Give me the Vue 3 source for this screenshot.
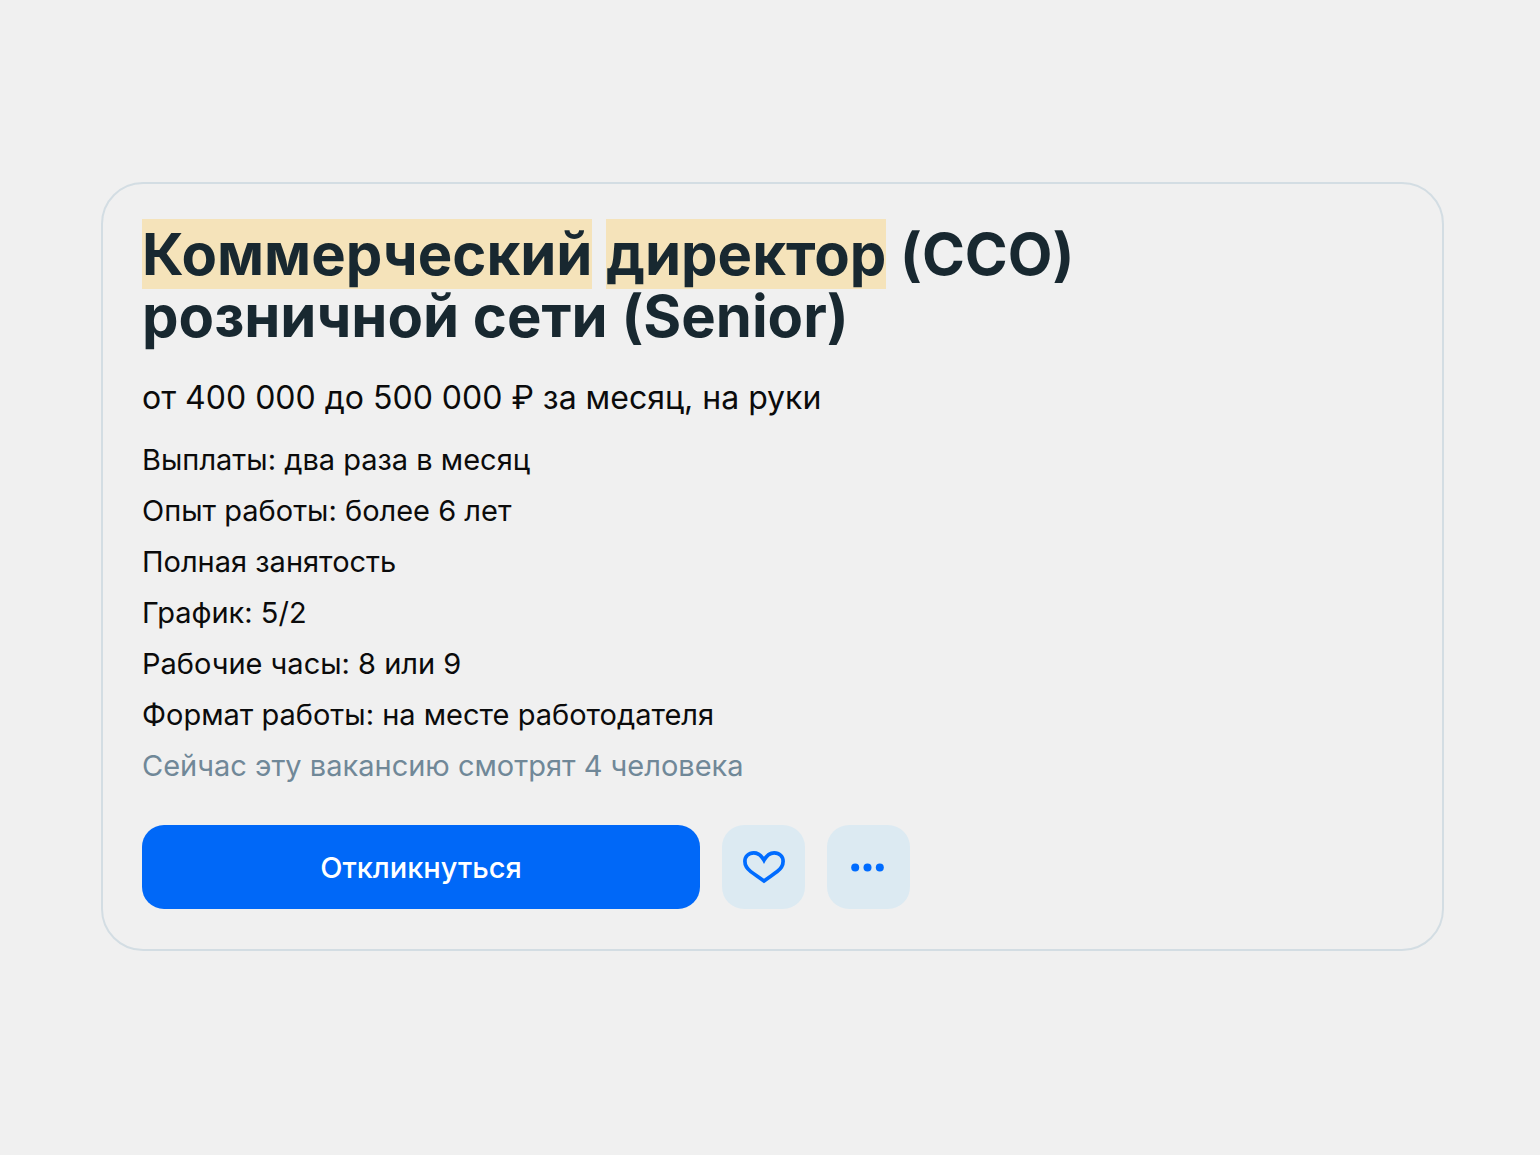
<script setup>
const details = [
  'Выплаты: два раза в месяц',
  'Опыт работы: более 6 лет',
  'Полная занятость',
  'График: 5/2',
  'Рабочие часы: 8 или 9',
  'Формат работы: на месте работодателя',
]
</script>

<template>
  <main class="page">
    <article class="card">
      <h1 class="title"><mark>Коммерческий</mark> <mark>директор</mark> (CCO)<br />розничной сети (Senior)</h1>
      <p class="salary">от 400 000 до 500 000 ₽ за месяц, на руки</p>
      <ul class="details">
        <li v-for="item in details" :key="item">{{ item }}</li>
        <li class="viewers">Сейчас эту вакансию смотрят 4 человека</li>
      </ul>
      <div class="actions">
        <button type="button" class="apply">Откликнуться</button>
        <button type="button" class="icon-button" aria-label="В избранное">
          <svg width="44" height="34" viewBox="0 0 44 34" fill="none" stroke="#006cff" stroke-width="3.7" stroke-linejoin="miter">
            <path d="M22 10.200C19.300 5.300 16 2.800 11.800 2.800C6.500 2.800 2.900 6.400 2.900 11.300C2.900 15.500 5 18.700 8.800 21.600C12.500 24.400 17 27.300 22 31C27 27.300 31.500 24.400 35.200 21.600C39 18.700 41.100 15.500 41.100 11.300C41.100 6.400 37.500 2.800 32.200 2.800C28 2.800 24.700 5.300 22 10.200Z" />
          </svg>
        </button>
        <button type="button" class="icon-button" aria-label="Ещё">
          <svg width="36" height="10" viewBox="0 0 36 10" fill="#006cff">
            <circle cx="4.200" cy="5.500" r="4" /><circle cx="16.500" cy="5.500" r="4" /><circle cx="28.800" cy="5.500" r="4" />
          </svg>
        </button>
      </div>
    </article>
  </main>
</template>

<style>
body {
  margin: 0;
  background: #f0f0f0;
}
</style>

<style scoped>
.page {
  box-sizing: border-box;
  min-height: 100vh;
  padding: 182px 96px 200px 101px;
  font-family: Inter, "Liberation Sans", sans-serif;
  color: #0b0b0b;
}
.card {
  box-sizing: border-box;
  padding: 39px 39px 40px;
  border: 2px solid #d3dde3;
  border-radius: 42px;
}
.title {
  margin: 0;
  font-size: 58px;
  line-height: 62px;
  font-weight: 700;
  color: #182830;
}
.title mark {
  background: #f5e3ba;
  color: inherit;
}
.salary {
  margin: 29px 0 14px;
  font-size: 32px;
  line-height: 44px;
}
.details {
  margin: 0;
  padding: 0;
  list-style: none;
  font-size: 29px;
  line-height: 51px;
}
.viewers {
  color: #708898;
}
.actions {
  display: flex;
  gap: 22px;
  margin-top: 34px;
}
.apply {
  width: 558px;
  height: 84px;
  border: 0;
  border-radius: 22px;
  background: #0068f8;
  color: #fff;
  font: 500 29px Inter, "Liberation Sans", sans-serif;
}
.icon-button {
  display: flex;
  align-items: center;
  justify-content: center;
  width: 83px;
  height: 84px;
  padding: 0;
  border: 0;
  border-radius: 22px;
  background: #dceaf2;
}
</style>
